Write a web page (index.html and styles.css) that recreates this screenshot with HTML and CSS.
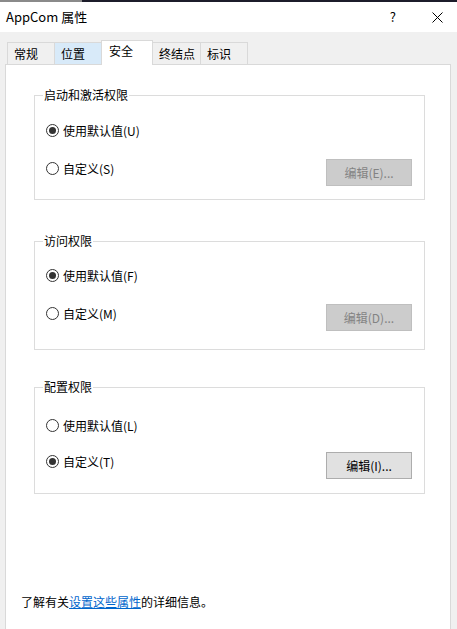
FILE: index.html
```html
<!DOCTYPE html>
<html lang="zh-CN">
<head>
<meta charset="utf-8">
<title>AppCom 属性</title>
<link rel="stylesheet" href="styles.css">
</head>
<body>
<div class="window">
  <div class="topstrip"><span class="strip-left"></span></div>
  <div class="titlebar">
    <span class="title">AppCom 属性</span>
    <div class="controls">
      <span class="help">?</span>
      <svg class="close" width="11" height="11" viewBox="0 0 11 11"><path d="M0.5 0.5 L10.5 10.5 M10.5 0.5 L0.5 10.5" stroke="#000" stroke-width="1" fill="none"/></svg>
    </div>
  </div>
  <div class="body">
    <div class="tabs">
      <div class="tab">常规</div>
      <div class="tab hover">位置</div>
      <div class="tab sel">安全</div>
      <div class="tab">终结点</div>
      <div class="tab">标识</div>
    </div>
    <div class="panel">
      <fieldset class="group g1">
        <legend>启动和激活权限</legend>
        <div class="row"><span class="radio on"></span><span>使用默认值(U)</span></div>
        <div class="row row2">
          <div class="opt"><span class="radio"></span><span>自定义(S)</span></div>
          <button class="btn" disabled>编辑(E)...</button>
        </div>
      </fieldset>
      <fieldset class="group g2">
        <legend>访问权限</legend>
        <div class="row"><span class="radio on"></span><span>使用默认值(F)</span></div>
        <div class="row row2">
          <div class="opt"><span class="radio"></span><span>自定义(M)</span></div>
          <button class="btn" disabled>编辑(D)...</button>
        </div>
      </fieldset>
      <fieldset class="group g3">
        <legend>配置权限</legend>
        <div class="row"><span class="radio"></span><span>使用默认值(L)</span></div>
        <div class="row row2">
          <div class="opt"><span class="radio on"></span><span>自定义(T)</span></div>
          <button class="btn active">编辑(I)...</button>
        </div>
      </fieldset>
      <p class="info">了解有关<a href="#">设置这些属性</a>的详细信息。</p>
    </div>
  </div>
</div>
</body>
</html>
```

FILE: styles.css
```css
* { box-sizing: border-box; }
html, body { margin: 0; padding: 0; }
body {
  width: 457px;
  height: 629px;
  overflow: hidden;
  background: #f0f0f0;
  font-family: "Noto Sans CJK SC", "Noto Sans", sans-serif;
  font-size: 12px;
  color: #000;
}
.window { width: 457px; height: 629px; display: flex; flex-direction: column; }
.topstrip { height: 2px; background: #1c1c2a; display: flex; }
.strip-left { width: 82px; background: #8a8a8a; }
.titlebar {
  height: 30px;
  background: #ffffff;
  display: flex;
  align-items: center;
  justify-content: space-between;
  padding: 0 14px 0 6px;
}
.title { font-size: 13px; line-height: 16px; }
.controls { display: flex; align-items: center; gap: 36px; }
.help { font-size: 13px; line-height: 16px; }
.close { display: block; }
.body { flex: 1; display: flex; flex-direction: column; padding: 8px 6px 0 5px; }
.tabs { display: flex; align-items: flex-end; height: 24px; padding-left: 2px; }
.tab {
  height: 22px;
  min-width: 48px;
  padding: 0 5px 0 6px;
  border: 1px solid #d9d9d9;
  border-bottom: none;
  margin-right: -1px;
  background: #f0f0f0;
  line-height: 22px;
  white-space: nowrap;
}
.tab.hover { background: #d8eaf9; }
.tab.sel {
  height: 25px;
  min-width: 52px;
  padding-left: 7px;
  background: #ffffff;
  line-height: 20px;
  margin-bottom: -1px;
  position: relative;
  z-index: 1;
}
.panel {
  flex: 1;
  background: #ffffff;
  border: 1px solid #d9d9d9;
  border-bottom: none;
  padding: 22px 25px 0 28px;
  display: flex;
  flex-direction: column;
}
.group {
  margin: 0;
  border: 1px solid #dcdcdc;
  padding: 17px 12px 13px 11px;
  min-width: 0;
}
.group legend { padding: 0 1px; margin-left: -3px; line-height: 16px; }
.g2 { margin-top: 33px; padding-top: 16px; padding-bottom: 18px; }
.g3 { margin-top: 29px; padding-top: 20px; padding-bottom: 14px; }
.row { display: flex; align-items: center; height: 20px; gap: 4px; }
.row2 { margin-top: 18px; height: auto; align-items: flex-start; justify-content: space-between; }
.g3 .row2 { margin-top: 16px; }
.opt { display: flex; align-items: center; height: 20px; gap: 4px; }
.radio {
  width: 13px;
  height: 13px;
  border: 1px solid #333333;
  border-radius: 50%;
  background: #ffffff;
  display: flex;
  align-items: center;
  justify-content: center;
  flex: none;
}
.radio.on::after {
  content: "";
  width: 7px;
  height: 7px;
  border-radius: 50%;
  background: #333333;
}
.btn {
  margin-top: 1px;
  width: 86px;
  height: 27px;
  font-family: inherit;
  font-size: 12px;
  border: 1px solid #bfbfbf;
  background: #cccccc;
  color: #838383;
  padding: 0;
}
.btn.active { background: #e1e1e1; border-color: #adadad; color: #000; }
.info { margin: auto 0 19px -13px; line-height: 16px; }
.info a { color: #0066cc; text-decoration: underline; }
```
